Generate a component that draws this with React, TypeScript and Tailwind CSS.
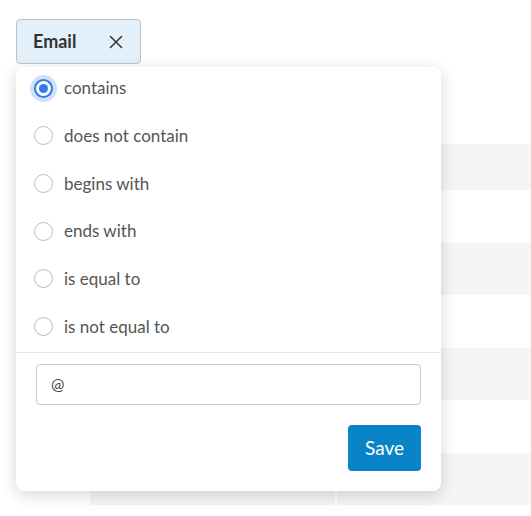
import { X } from 'lucide-react'

const options = ['contains', 'does not contain', 'begins with', 'ends with', 'is equal to', 'is not equal to']

// striped rows of the table that sits behind the popover
const rows = [
  { h: 'h-[46px]', grey: true },
  { h: 'h-[52.5px]', grey: false },
  { h: 'h-[52.5px]', grey: true },
  { h: 'h-[52.5px]', grey: false },
  { h: 'h-[52.5px]', grey: true },
  { h: 'h-[52.5px]', grey: false },
  { h: 'h-[52.5px]', grey: true },
]

export default function App() {
  return (
    <div className="relative h-[516px] w-[531px] overflow-hidden bg-white font-['Lato','Noto_Sans',sans-serif]">
      {/* Filter chip */}
      <div className="pl-[16px] pt-[19px]">
        <div className="flex h-[45px] w-[125px] items-center justify-between rounded-[4px] border border-[#bfc3c7] bg-[#e3f0fa] pl-[16px] pr-[13px]">
          <span className="text-[18px] font-bold text-[#333]">Email</span>
          <X size={22} strokeWidth={1.6} className="text-[#333]" />
        </div>
      </div>

      {/* Table behind */}
      <div className="ml-[90px] mt-[80px]">
        {rows.map((r, i) => (
          <div key={i} className={`grid grid-cols-[245px_1fr] gap-x-[2px] ${r.h}`}>
            <div className={r.grey ? 'bg-[#f5f5f5]' : 'bg-white'} />
            <div className={r.grey ? 'bg-[#f5f5f5]' : 'bg-white'} />
          </div>
        ))}
      </div>

      {/* Popover */}
      <div className="absolute left-[16px] top-[67px] flex h-[424px] w-[425px] flex-col rounded-lg bg-white shadow-[0_4px_16px_rgba(0,0,0,0.16)]">
        <div className="flex flex-col gap-[23.7px] pb-[13.5px] pl-[18px] pt-[9px]">
          {options.map((o, i) => (
            <label key={o} className="flex h-[24px] items-center gap-[11px]">
              {i === 0 ? (
                <span className="flex h-[19px] w-[19px] items-center justify-center rounded-full border-2 border-[#2f7be8] bg-white shadow-[0_0_0_4px_#cfe1fb]">
                  <span className="h-[9px] w-[9px] rounded-full bg-[#2f7be8]" />
                </span>
              ) : (
                <span className="h-[19px] w-[19px] rounded-full border border-[#bdbdbd] bg-white" />
              )}
              <span className="text-[17px] text-[#555]">{o}</span>
            </label>
          ))}
        </div>
        <div className="border-t border-[#e6e6e6] px-[20px] pt-[11px]">
          <div className="flex h-[41px] items-center rounded-[4px] border border-[#c8c8c8] px-[14px] text-[16px] text-[#444]">
            @
          </div>
          <div className="mt-[20px] flex justify-end">
            <button className="h-[46px] w-[73px] rounded-[4px] bg-[#0a84c8] text-[19px] text-white">Save</button>
          </div>
        </div>
      </div>
    </div>
  )
}
